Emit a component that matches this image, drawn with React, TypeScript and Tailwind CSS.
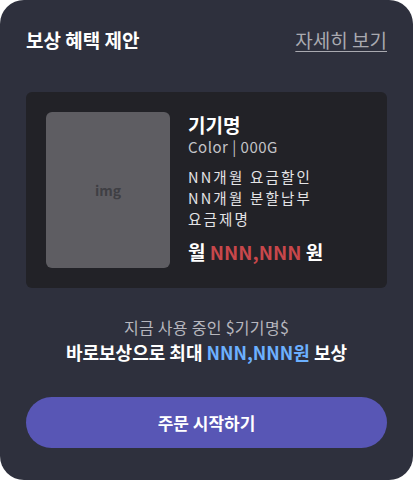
const FONT = "font-['Noto_Sans_CJK_KR','Noto_Sans',sans-serif]";

function DeviceCard() {
  return (
    <div className="flex rounded-[6px] bg-[#222227] p-[20px] pr-[18px]">
      {/* placeholder image */}
      <div className="flex h-[156px] w-[124px] shrink-0 items-center justify-center rounded-[6px] bg-[#5e5d62]">
        <span className="text-[14px] font-semibold text-[#3f3f44]">img</span>
      </div>
      <div className="ml-[18px] flex flex-col">
        <p className="text-[19px] font-bold leading-[26px] text-white">기기명</p>
        <p className="text-[15px] leading-[18px] tracking-[0.5px] text-[#c4c4c8]">Color | 000G</p>
        <div className="mt-[10px] flex flex-col text-[14.5px] leading-[21px] tracking-[2.2px] text-[#e4e4e6]">
          <p>NN개월 요금할인</p>
          <p>NN개월 분할납부</p>
          <p>요금제명</p>
        </div>
        <p className="mt-[10px] text-[19px] font-bold leading-[26px] text-white">
          월 <span className="text-[#c8474b]">NNN,NNN</span> 원
        </p>
      </div>
    </div>
  );
}

export default function App() {
  return (
    <div className={`min-h-[480px] bg-white ${FONT}`}>
      <div className="flex h-[480px] w-[413px] flex-col rounded-[24px] bg-[#2e303d] px-[26px] pt-[28px]">
        <div className="flex items-center justify-between">
          <h2 className="text-[19px] font-bold leading-[24px] text-white">보상 혜택 제안</h2>
          <a className="text-[19px] leading-[24px] text-[#a9a9b0] underline underline-offset-[3px]">
            자세히 보기
          </a>
        </div>

        <div className="mt-[40px]">
          <DeviceCard />
        </div>

        <div className="mt-[28px] flex flex-col items-center">
          <p className="text-[16px] leading-[22px] tracking-[0.3px] text-[#b6b6bd]">지금 사용 중인 $기기명$</p>
          <p className="mt-[1px] text-[18px] font-bold leading-[26px] text-white">
            바로보상으로 최대 <span className="text-[#6cb0ff]">NNN,NNN원</span> 보상
          </p>
        </div>

        <button className="mt-[32px] h-[51px] w-full rounded-full bg-[#5856b5] text-[17px] font-bold text-white">
          주문 시작하기
        </button>
      </div>
    </div>
  );
}
